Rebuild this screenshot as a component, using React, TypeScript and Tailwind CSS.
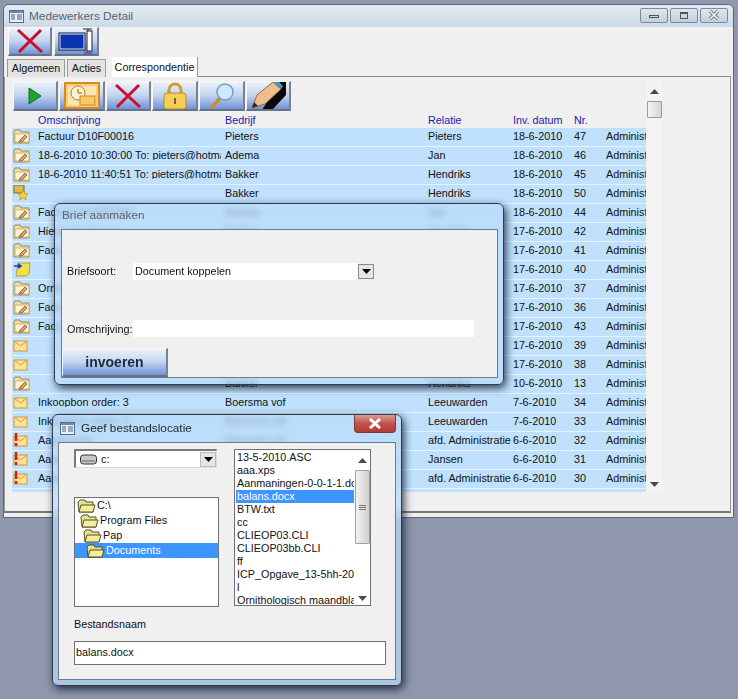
import React from 'react';

type RowIcon = 'folder' | 'star' | 'note' | 'mail' | 'alert';

interface Row {
    icon: RowIcon;
    text: string;
    bedrijf: string;
    relatie: string;
    datum: string;
    nr: string;
}

const rows: Row[] = [
    { icon: 'folder', text: 'Factuur D10F00016', bedrijf: 'Pieters', relatie: 'Pieters', datum: '18-6-2010', nr: '47' },
    { icon: 'folder', text: '18-6-2010 10:30:00 To: pieters@hotmail.com', bedrijf: 'Adema', relatie: 'Jan', datum: '18-6-2010', nr: '46' },
    { icon: 'folder', text: '18-6-2010 11:40:51 To: pieters@hotmail.com', bedrijf: 'Bakker', relatie: 'Hendriks', datum: '18-6-2010', nr: '45' },
    { icon: 'star', text: '', bedrijf: 'Bakker', relatie: 'Hendriks', datum: '18-6-2010', nr: '50' },
    { icon: 'folder', text: 'Factuur D10F00015', bedrijf: 'Adema', relatie: 'Jan', datum: '18-6-2010', nr: '44' },
    { icon: 'folder', text: 'Hierbij de factuur', bedrijf: 'Bakker', relatie: 'Hendriks', datum: '17-6-2010', nr: '42' },
    { icon: 'folder', text: 'Factuur D10F00014', bedrijf: 'Bakker', relatie: 'Hendriks', datum: '17-6-2010', nr: '41' },
    { icon: 'note', text: '', bedrijf: 'Bakker', relatie: 'Hendriks', datum: '17-6-2010', nr: '40' },
    { icon: 'folder', text: 'Ornithologisch', bedrijf: 'Bakker', relatie: 'Hendriks', datum: '17-6-2010', nr: '37' },
    { icon: 'folder', text: 'Factuur D10F00013', bedrijf: 'Adema', relatie: 'Jan', datum: '17-6-2010', nr: '36' },
    { icon: 'folder', text: 'Factuur D10F00012', bedrijf: 'Adema', relatie: 'Jan', datum: '17-6-2010', nr: '43' },
    { icon: 'mail', text: '', bedrijf: 'Bakker', relatie: 'Hendriks', datum: '17-6-2010', nr: '39' },
    { icon: 'mail', text: '', bedrijf: 'Bakker', relatie: 'Hendriks', datum: '17-6-2010', nr: '38' },
    { icon: 'folder', text: '', bedrijf: 'Bakker', relatie: 'Hendriks', datum: '10-6-2010', nr: '13' },
    { icon: 'mail', text: 'Inkoopbon order: 3', bedrijf: 'Boersma vof', relatie: 'Leeuwarden', datum: '7-6-2010', nr: '34' },
    { icon: 'mail', text: 'Inkoopbon order: 2', bedrijf: 'Boersma vof', relatie: 'Leeuwarden', datum: '7-6-2010', nr: '33' },
    { icon: 'alert', text: 'Aanmaning', bedrijf: 'Boersma vof', relatie: 'afd. Administratie', datum: '6-6-2010', nr: '32' },
    { icon: 'alert', text: 'Aanmaning', bedrijf: 'Mooren', relatie: 'Jansen', datum: '6-6-2010', nr: '31' },
    { icon: 'alert', text: 'Aanmaning', bedrijf: 'Boersma vof', relatie: 'afd. Administratie', datum: '6-6-2010', nr: '30' },
];

const files = ['13-5-2010.ASC', 'aaa.xps', 'Aanmaningen-0-0-1-1.doc', 'balans.docx', 'BTW.txt', 'cc', 'CLIEOP03.CLI', 'CLIEOP03bb.CLI', 'ff', 'ICP_Opgave_13-5hh-2010', 'l', 'Ornithologisch maandblad'];

const bevel = 'bg-gradient-to-b from-[#eef2fa] via-[#c3d3ee] to-[#6f93d6] border-t border-l border-t-[#f8f8f8] border-l-[#f8f8f8] border-r-2 border-b-2 border-r-[#7b8190] border-b-[#6b7180]';

function CrossIcon() {
    return (
        <svg width="30" height="26" viewBox="0 0 30 26">
            <path d="M3 2 L27 24 M26 2 L4 24" stroke="#c8102e" strokeWidth="3" fill="none" />
        </svg>
    );
}

function MonitorIcon() {
    return (
        <svg width="40" height="28" viewBox="0 0 40 28">
            <rect x="3" y="6" width="26" height="17" fill="#0a34b0" stroke="#111" />
            <rect x="4" y="7" width="24" height="15" fill="none" stroke="#dfe8ff" />
            <path d="M27 2h9M32 2v2" stroke="#222" fill="none" />
            <rect x="31" y="4" width="5" height="20" fill="#fff" stroke="#222" />
            <path d="M28 26h8" stroke="#6a5aa8" strokeWidth="3" />
        </svg>
    );
}

function PlayIcon() {
    return (
        <svg width="14" height="18" viewBox="0 0 14 18">
            <path d="M1 1 L13 9 L1 17 Z" fill="#1fa32a" stroke="#0e6b1a" />
        </svg>
    );
}

function ClockMailIcon() {
    return (
        <svg width="36" height="27" viewBox="0 0 36 27">
            <rect x="1" y="1" width="34" height="25" fill="#f4cd7d" stroke="#d68a1f" strokeWidth="2" />
            <rect x="4" y="4" width="28" height="19" fill="#fbe6b3" />
            <circle cx="14" cy="11" r="7" fill="#fdf3d6" stroke="#b8801e" />
            <path d="M14 7v4h4" stroke="#8a5a10" fill="none" />
            <rect x="16" y="14" width="15" height="9" fill="#f6c968" stroke="#c98a24" />
        </svg>
    );
}

function LockIcon() {
    return (
        <svg width="26" height="28" viewBox="0 0 26 28">
            <path d="M7 12V8a6 6 0 0 1 12 0v4" fill="none" stroke="#caa02e" strokeWidth="3" />
            <rect x="2" y="11" width="22" height="16" rx="3" fill="#f3cf57" stroke="#b98f22" />
            <path d="M13 16v6" stroke="#7d6214" strokeWidth="2" />
        </svg>
    );
}

function LensIcon() {
    return (
        <svg width="26" height="26" viewBox="0 0 26 26">
            <path d="M3 24 L12 14" stroke="#c98a3a" strokeWidth="3.5" strokeLinecap="round" />
            <circle cx="16" cy="9" r="8" fill="#cfe8fb" stroke="#6f9fc8" strokeWidth="1.5" />
        </svg>
    );
}

function PencilIcon() {
    return (
        <svg width="36" height="29" viewBox="0 0 36 29">
            <path d="M30 0h6v14L22 29H12z" fill="#0a0a0a" />
            <path d="M2 27 L7 14 L23 1 L31 8 L15 23 Z" fill="#f0bd8c" stroke="#9b6a3c" />
            <path d="M23 1 L28 0 L33 5 L31 8 Z" fill="#3c9ccf" />
            <path d="M2 27 L4 21 L8 25 Z" fill="#2a2a2a" />
        </svg>
    );
}

function RowGlyph({ icon }: { icon: RowIcon }) {
    if (icon === 'folder') {
        return (
            <svg width="18" height="15" viewBox="0 0 18 15">
                <path d="M1 3l1-2h5l1 2h8v11H1z" fill="#f3dfa6" stroke="#9a8a5a" />
                <path d="M2 5h14v8H2z" fill="#fff6d8" stroke="#d3b36a" />
                <path d="M6 13 L7 11 L12 6 L14 8 L9 13 Z" fill="#e8a23c" stroke="#5a4a7a" strokeWidth="0.7" />
            </svg>
        );
    }
    if (icon === 'star') {
        return (
            <svg width="18" height="16" viewBox="0 0 18 16">
                <rect x="1" y="0" width="10" height="8" fill="#e0b94a" stroke="#7d6a2a" />
                <path d="M10 5l1.6 3.4 3.6.4-2.7 2.4.8 3.6-3.3-1.9-3.3 1.9.8-3.6-2.7-2.4 3.6-.4z" fill="#f7d52a" stroke="#a88a10" strokeWidth="0.6" />
            </svg>
        );
    }
    if (icon === 'note') {
        return (
            <svg width="18" height="15" viewBox="0 0 18 15">
                <path d="M5 1h12l-1 11-3 2H3z" fill="#f5dc4e" stroke="#a78a20" strokeWidth="0.7" />
                <path d="M1 4h6M5 2l3 2-3 2" stroke="#1a3fb0" strokeWidth="1.6" fill="none" />
            </svg>
        );
    }
    return (
        <svg width="16" height="15" viewBox="0 0 16 15">
            <rect x="1" y="3" width="13" height="10" fill="#fbe39a" stroke="#d39a34" />
            <path d="M1 3l6.5 5L14 3" fill="none" stroke="#d39a34" />
            {icon === 'alert' && <path d="M3 0v8M3 10v3" stroke="#d8191c" strokeWidth="2.4" />}
        </svg>
    );
}

function FolderSmall() {
    return (
        <svg width="19" height="14" viewBox="0 0 19 14" className="shrink-0">
            <path d="M1 3l2-2h5l1 2h7v10H2z" fill="#e9e28f" stroke="#55512a" />
            <path d="M4 6h14l-2 7H2z" fill="#f2ee9e" stroke="#55512a" />
        </svg>
    );
}

function WinIcon() {
    return (
        <svg width="15" height="13" viewBox="0 0 15 13" className="shrink-0">
            <rect x="0.5" y="0.5" width="14" height="12" fill="#e8eef8" stroke="#5a6c8c" />
            <path d="M1 1h13v2H1z" fill="#6d86b4" />
            <path d="M2 5h4M2 7h4M2 9h4M8 5h5M8 7h5M8 9h5" stroke="#50607c" />
        </svg>
    );
}

function ScrollArrow({ up, dark }: { up?: boolean; dark?: boolean }) {
    return (
        <svg width="9" height="5" viewBox="0 0 9 5">
            <path d={up ? 'M4.5 0 L9 5 H0 Z' : 'M0 0 H9 L4.5 5 Z'} fill={dark ? '#000' : '#4a4a4a'} />
        </svg>
    );
}

function Dialog({ className, children }: { className: string; children: React.ReactNode }) {
    return (
        <div className={'absolute rounded-md border border-[#2f3b4c] bg-[#b9dcfa]/70 backdrop-blur-[3px] shadow-[2px_3px_9px_rgba(15,25,45,0.85)] ' + className}>
            {children}
        </div>
    );
}

export default function App() {
    return (
        <div className="relative w-[738px] h-[699px] overflow-hidden bg-[#8e97ac] text-[10.8px] leading-none text-[#111] font-['Liberation_Sans',sans-serif]">
            {/* Main window */}
            <div className="ml-[3px] pt-[4px] w-[731px] h-[518px] flex flex-col">
                <div className="flex-1 flex flex-col min-h-0 rounded-t-md border border-[#5d6677] bg-[#f0f0f0] pb-[4px]">
                    <div className="h-[22px] shrink-0 flex items-center pl-[5px] pr-[5px] rounded-t-md bg-gradient-to-b from-[#e4ecf4] to-[#ccdae8]">
                        <WinIcon />
                        <span className="ml-[5px] mt-[2px] text-[11.8px] text-[#5c6470]">Medewerkers Detail</span>
                        <div className="ml-auto flex gap-[2px] mt-[-2px]">
                            {['min', 'max', 'close'].map(b => (
                                <div key={b} className="w-[28px] h-[15px] flex items-center justify-center rounded-[2px] border border-[#7f8a99] bg-gradient-to-b from-[#dfe7f0] to-[#c2cfdd]">
                                    {b === 'min' && <div className="w-[10px] h-[3px] mt-[3px] border border-[#555]" />}
                                    {b === 'max' && <div className="w-[8px] h-[7px] border border-t-2 border-[#555]" />}
                                    {b === 'close' && (
                                        <svg width="12" height="10" viewBox="0 0 12 10">
                                            <path d="M2 1l8 8M10 1L2 9" stroke="#6d7785" strokeWidth="3.4" />
                                            <path d="M2 1l8 8M10 1L2 9" stroke="#f2f5f8" strokeWidth="1.6" />
                                        </svg>
                                    )}
                                </div>
                            ))}
                        </div>
                    </div>

                    <div className="flex gap-[2px] pl-[4px] h-[29px] shrink-0">
                        <button className={'w-[44px] h-[29px] flex items-center justify-center ' + bevel}><CrossIcon /></button>
                        <button className={'w-[45px] h-[29px] flex items-center justify-center ' + bevel}><MonitorIcon /></button>
                    </div>

                    <div className="flex items-end h-[21px] shrink-0 pl-[3px]">
                        <div className="w-[58px] h-[18px] flex items-center justify-center bg-[#e3e3e3] border border-b-0 border-[#9a9a9a]">Algemeen</div>
                        <div className="ml-[2px] w-[39px] h-[18px] flex items-center justify-center bg-[#e3e3e3] border border-b-0 border-[#9a9a9a]">Acties</div>
                        <div className="ml-[6px] w-[86px] h-[20px] flex items-center justify-center bg-white border-r border-[#9a9a9a]">Correspondentie</div>
                        <div className="flex-1 border-b border-[#8a8a8a] mr-[2px]" />
                    </div>

                    <div className="flex-1 min-h-0 mr-[2px] border-b-2 border-b-[#777] border-r border-r-[#999] border-l border-l-[#999] flex pl-[7px] pt-[4px]">
                        <div className="w-[634px] flex flex-col">
                            <div className="flex gap-[1px] h-[30px] shrink-0 pl-px">
                                <button className={'w-[45px] flex items-center justify-center ' + bevel}><PlayIcon /></button>
                                <button className={'w-[46px] flex items-center justify-center ' + bevel}><ClockMailIcon /></button>
                                <button className={'w-[45px] flex items-center justify-center ' + bevel}><CrossIcon /></button>
                                <button className={'w-[46px] flex items-center justify-center ' + bevel}><LockIcon /></button>
                                <button className={'w-[46px] flex items-center justify-center ' + bevel}><LensIcon /></button>
                                <button className={'w-[45px] flex items-center justify-center overflow-hidden ' + bevel}><PencilIcon /></button>
                            </div>
                            <div className="grid grid-cols-[26px_187px_203px_85px_61px_32px_40px] h-[17px] pt-px shrink-0 items-center text-[#1a1aaa]">
                                <span />
                                <span>Omschrijving</span>
                                <span>Bedrijf</span>
                                <span>Relatie</span>
                                <span>Inv. datum</span>
                                <span>Nr.</span>
                                <span />
                            </div>
                            {rows.map(r => (
                                <div key={r.nr} className="grid grid-cols-[26px_187px_203px_85px_61px_32px_40px] h-[19px] pb-[2px] shrink-0 items-center bg-[#bfe1fd] border-b border-b-[#e6f3fe] whitespace-nowrap">
                                    <span className="pl-px"><RowGlyph icon={r.icon} /></span>
                                    <span className="mr-[4px] overflow-hidden">{r.text}</span>
                                    <span>{r.bedrijf}</span>
                                    <span>{r.relatie}</span>
                                    <span>{r.datum}</span>
                                    <span>{r.nr}</span>
                                    <span className="overflow-hidden">Administratie</span>
                                </div>
                            ))}
                            <div className="h-[3px] shrink-0 bg-[#bfe1fd]" />
                        </div>
                        <div className="w-[16px] h-[410px] flex flex-col items-center bg-[#f3f3f3]">
                            <div className="h-[20px] flex items-center"><ScrollArrow up /></div>
                            <div className="w-[15px] h-[17px] rounded-[1px] border border-[#9a9a9a] bg-gradient-to-r from-[#f4f4f4] to-[#d6d6d6]" />
                            <div className="mt-auto mb-[4px]"><ScrollArrow /></div>
                        </div>
                    </div>
                </div>
            </div>

            {/* Brief aanmaken */}
            <Dialog className="left-[54px] top-[203px] w-[450px] h-[182px] pl-[6px] pr-[5px] pb-[6px] flex flex-col">
                <div className="h-[25px] shrink-0 flex items-center pl-[1px] pb-[2px] text-[11.8px] text-[#5c6470]">Brief aanmaken</div>
                <div className="flex-1 border border-[#6e7a88] bg-[#f0f0f0] flex flex-col pl-[5px]">
                    <div className="flex items-center mt-[33px] h-[17px]">
                        <span className="w-[66px]">Briefsoort:</span>
                        <div className="w-[225px] h-[17px] bg-white flex items-center pl-[2px]">Document koppelen</div>
                        <div className="w-[16px] h-[15px] flex items-center justify-center bg-[#e6e6e6] border border-[#8a8a8a]"><ScrollArrow dark /></div>
                    </div>
                    <div className="flex items-center mt-[40px] h-[17px]">
                        <span className="w-[66px] mt-[2px]">Omschrijving:</span>
                        <div className="w-[341px] h-[17px] bg-white" />
                    </div>
                    <button className={'mt-auto -ml-[5px] w-[106px] h-[29px] text-[14px] font-bold text-[#1c2a3c] ' + bevel}>invoeren</button>
                </div>
            </Dialog>

            {/* Geef bestandslocatie */}
            <Dialog className="left-[52px] top-[414px] w-[350px] h-[272px] px-[5px] pb-[5px] flex flex-col">
                <div className="h-[27px] shrink-0 flex items-center pl-[2px] relative">
                    <WinIcon />
                    <span className="ml-[6px] text-[11.8px] text-[#1c2430]">Geef bestandslocatie</span>
                    <div className="absolute right-[0px] top-0 w-[42px] h-[18px] flex items-center justify-center rounded-b-[4px] border border-t-0 border-[#7c3a3a] bg-gradient-to-b from-[#dd9a92] via-[#c0524a] to-[#b23c34]">
                        <svg width="14" height="11" viewBox="0 0 14 11">
                            <path d="M2 1l10 9M12 1L2 10" stroke="#fff" strokeWidth="3" />
                        </svg>
                    </div>
                </div>
                <div className="flex-1 border border-[#6e7a88] bg-[#f0f0f0] flex flex-col pl-[15px] pt-[6px]">
                    <div className="flex">
                        <div className="w-[160px] flex flex-col">
                            <div className="w-[143px] h-[19px] bg-white border-t-2 border-l-2 border-[#7a7a7a] border-b border-r border-b-[#dddddd] border-r-[#dddddd] flex items-center pl-[4px] gap-[2px]">
                                <svg width="17" height="11" viewBox="0 0 17 11">
                                    <rect x="0.5" y="1" width="16" height="9" rx="3" fill="#c8c8c8" stroke="#333" />
                                    <path d="M2 7h13" stroke="#666" />
                                </svg>
                                <span className="ml-[2px]">c:</span>
                                <div className="ml-auto w-[16px] h-[15px] flex items-center justify-center bg-[#e6e6e6] border border-[#bbb]"><ScrollArrow dark /></div>
                            </div>
                            <div className="mt-[29px] w-[145px] h-[110px] bg-white border border-[#707070]">
                                {['C:\\', 'Program Files', 'Pap', 'Documents'].map((name, i) => (
                                    <div key={name} className={i === 3 ? 'h-[15px] flex items-center bg-[#3d95ff] text-white' : 'h-[15px] flex items-center'}>
                                        <div className={['w-[2px]', 'w-[5px]', 'w-[8px]', 'w-[11px]'][i] + ' shrink-0'} />
                                        <FolderSmall />
                                        <span className="ml-[1px]">{name}</span>
                                    </div>
                                ))}
                            </div>
                        </div>
                        <div className="w-[137px] h-[157px] bg-white border border-[#707070] flex pl-px pt-px">
                            <div className="w-[118px] overflow-hidden whitespace-nowrap">
                                {files.map(f => (
                                    <div key={f} className={f === 'balans.docx' ? 'h-[13px] flex items-center pl-[1px] bg-[#3d95ff] text-white' : 'h-[13px] flex items-center pl-[1px]'}>{f}</div>
                                ))}
                            </div>
                            <div className="w-[16px] flex flex-col items-center">
                                <div className="h-[19px] flex items-center"><ScrollArrow up /></div>
                                <div className="w-[15px] h-[74px] rounded-[1px] border border-[#a0a0a0] bg-gradient-to-r from-[#f2f2f2] to-[#cfcfcf] flex flex-col items-center justify-center gap-px">
                                    <div className="w-[7px] h-px bg-[#777]" />
                                    <div className="w-[7px] h-px bg-[#777]" />
                                    <div className="w-[7px] h-px bg-[#777]" />
                                </div>
                                <div className="mt-auto mb-[4px]"><ScrollArrow /></div>
                            </div>
                        </div>
                    </div>
                    <div className="mt-[12px]">Bestandsnaam</div>
                    <div className="mt-[11px] w-[312px] h-[24px] bg-white border border-[#707070] flex items-center pl-px">balans.docx</div>
                </div>
            </Dialog>
        </div>
    );
}
